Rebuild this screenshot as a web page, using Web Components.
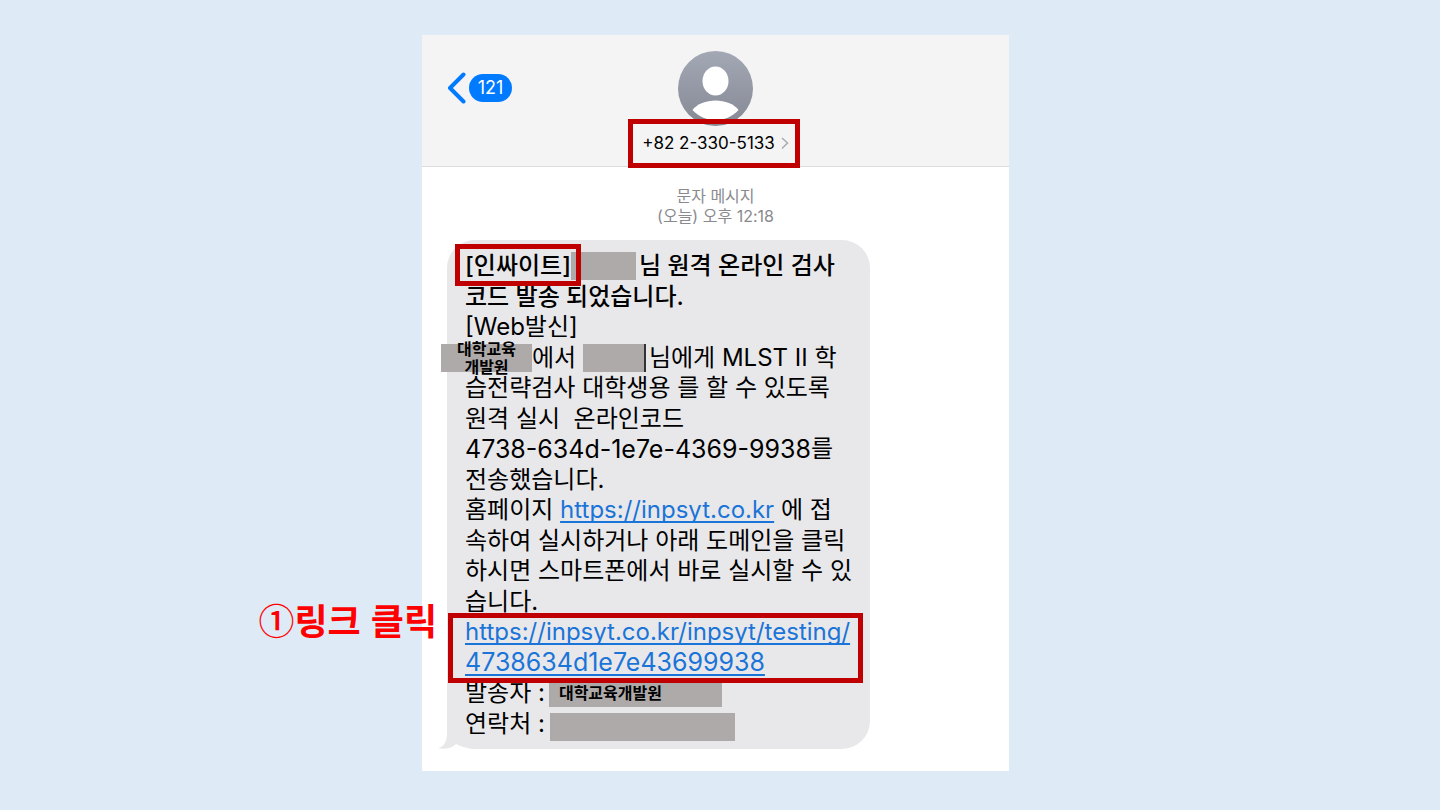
<!DOCTYPE html>
<html lang="ko">
<head>
<meta charset="utf-8">
<meta name="viewport" content="width=device-width, initial-scale=1">
<title>문자 메시지</title>
<style>
  body { margin: 0; min-height: 100vh; background: #deeaf6; color: #000;
    font-family: Inter, "Noto Sans CJK KR", sans-serif; }
</style>
</head>
<body>
<guide-slide>
  <phone-screen>
    <contact-header slot="header" unread="121">+82 2-330-5133</contact-header>
    <time-stamp><span>문자 메시지</span><span slot="time">(오늘) 오후 12:18</span></time-stamp>
    <message-bubble></message-bubble>
  </phone-screen>
</guide-slide>
<script>
const define = (name, html) => {
  const template = document.createElement('template');
  template.innerHTML = html;
  customElements.define(name, class extends HTMLElement {
    constructor() {
      super();
      this.attachShadow({ mode: 'open' }).append(template.content.cloneNode(true));
    }
    connectedCallback() {
      const count = this.shadowRoot.querySelector('[data-unread]');
      if (count) count.textContent = this.getAttribute('unread');
    }
  });
};

define('guide-slide', `
<style>
  :host { display: flex; justify-content: center; box-sizing: border-box; min-height: 100vh; padding: 35px 9px 39px 0; }
</style>
<slot></slot>`);

define('phone-screen', `
<style>
  :host { display: flex; flex-direction: column; width: 100%; max-width: 587px; background: #fff; }
  main { display: flex; flex-direction: column; padding: 19px 25px; }
</style>
<slot name="header"></slot>
<main><slot></slot></main>`);

/* Red rectangle drawn around whatever is slotted in. */
define('ring-mark', `
<style>
  :host { display: block; position: relative; white-space: nowrap; }
  i { position: absolute; inset: var(--ring-inset, -8px); border: 5px solid #c00000; pointer-events: none; z-index: 1; }
</style>
<slot></slot><i></i>`);

/* Grey block that hides private text. */
define('redacted-text', `
<style>
  :host { display: flex; flex: none; align-items: center; justify-content: center; height: 28px;
    background: #aeaaa9; font-size: 16px; line-height: 18px; font-weight: 700; text-align: center; white-space: pre; }
</style>
<slot></slot>`);

define('contact-header', `
<style>
  :host { display: grid; grid-template-columns: 1fr auto 1fr; padding: 16px 25px 11px; background: #f4f4f4; border-bottom: 1px solid #dcdcdd; }
  button { border: 0; padding: 0; background: none; font: inherit; color: inherit; display: flex; align-items: center; }
  .back { height: 74px; gap: 3px; justify-self: start; }
  .count { min-width: 43px; line-height: 28px; border-radius: 14px; background: #007aff; color: #fff; font-size: 18px; text-align: center; }
  .contact { display: flex; flex-direction: column; align-items: center; gap: 5px; }
  .name { gap: 6px; font-size: 17px; line-height: 24px; }
  ring-mark { --ring-inset: -12px -11px -13px -14px; }
  svg { display: block; }
</style>
<button class="back" aria-label="뒤로">
  <svg width="19" height="32" viewBox="0 0 19 32"><path d="M16.500 2.500 3 16l13.500 13.500" fill="none" stroke="#007aff" stroke-width="4" stroke-linecap="round" stroke-linejoin="round"/></svg>
  <span class="count" data-unread></span>
</button>
<div class="contact">
  <svg width="75" height="75" viewBox="0 0 75 75">
    <defs><linearGradient id="g" x2="0" y2="1"><stop stop-color="#a3a8b5"/><stop offset="1" stop-color="#858994"/></linearGradient></defs>
    <circle cx="37.500" cy="37.500" r="37.500" fill="url(#g)"/>
    <ellipse cx="37.500" cy="30" rx="13" ry="14.500" fill="#fff"/>
    <path d="M14.500 59C19 53 28 49.500 37.500 49.500S56 53 60.500 59C54 66 46 69 37.500 69S21 66 14.500 59Z" fill="#fff"/>
  </svg>
  <ring-mark><button class="name"><slot></slot>
    <svg width="8" height="14" viewBox="0 0 8 14"><path d="m1 2 5.500 5L1 12.500" fill="none" stroke="#a9abb3" stroke-width="1.500"/></svg>
  </button></ring-mark>
</div>`);

define('time-stamp', `
<style>
  :host { display: flex; flex-direction: column; align-items: center; color: #8a8a8e; font-size: 16px; line-height: 20px; }
</style>
<slot></slot><slot name="time"></slot>`);

define('message-bubble', `
<style>
  :host { display: block; position: relative; box-sizing: border-box; width: 423px; max-width: 100%; margin-top: 14px; padding: 11px 0 10px 18px;
    border-radius: 28px; background: #e8e8ea; font-size: 24px; }
  .tail { position: absolute; left: -9px; bottom: 0; }
  .line { position: relative; display: flex; align-items: center; height: 30px; line-height: 30px; white-space: pre; }
  .tall { height: 31px; }
  .strong { font-weight: 500; }
  .code { font-size: 25px; }
  a { color: #1b74d8; text-decoration: underline; text-decoration-thickness: 2px; text-underline-offset: 3px; text-decoration-skip-ink: none; }
  .tag { --ring-inset: -7px -10px -5px -10px; }
  .link { --ring-inset: -4px 7px -5px -17px; }
  .link a { display: block; line-height: 30px; white-space: pre; }
  .user { width: 65px; margin-right: 3px; }
  .office { width: 91px; margin-left: -24px; }
  .person { width: 61px; margin-right: 3px; border-right: 2px solid #333; }
  .sender { width: 173px; box-sizing: border-box; justify-content: start; padding-left: 10px; margin-left: 4px; }
  .phone { width: 185px; margin: 6px 0 0 5px; }
  .callout { position: absolute; right: 100%; top: -16px; margin-right: 28px; color: #f00; font: 700 36px/36px "Noto Sans CJK KR", sans-serif; white-space: pre; display: flex; }
  .callout span { font-weight: 500; }
</style>
<svg class="tail" width="40" height="32" viewBox="0 0 40 32"><path d="M9 0V16C9 24 6 30 0 31C7 33 14 31 18 27Q25 31 36 32L40 0Z" fill="#e8e8ea"/></svg>
<div class="line strong"><ring-mark class="tag">[인싸이트]</ring-mark><redacted-text class="user"></redacted-text>님 원격 온라인 검사</div>
<div class="line tall strong">코드 발송 되었습니다.</div>
<div class="line">[Web발신]</div>
<div class="line tall"><redacted-text class="office">대학교육
개발원</redacted-text>에서 <redacted-text class="person"></redacted-text>님에게 MLST II 학</div>
<div class="line">습전략검사 대학생용 를 할 수 있도록</div>
<div class="line tall">원격 실시  온라인코드</div>
<div class="line"><span class="code">4738-634d-1e7e-4369-9938</span>를</div>
<div class="line tall">전송했습니다.</div>
<div class="line">홈페이지 <a href="https://inpsyt.co.kr">https://inpsyt.co.kr</a> 에 접</div>
<div class="line tall">속하여 실시하거나 아래 도메인을 클릭</div>
<div class="line">하시면 스마트폰에서 바로 실시할 수 있</div>
<div class="line tall">습니다.</div>
<ring-mark class="link">
  <div class="callout"><span>①</span>링크 클릭</div>
  <a href="https://inpsyt.co.kr/inpsyt/testing/4738634d1e7e43699938">https://inpsyt.co.kr/inpsyt/testing/
<span class="code">4738634d1e7e43699938</span></a>
</ring-mark>
<div class="line">발송자 :<redacted-text class="sender">대학교육개발원</redacted-text></div>
<div class="line tall">연락처 :<redacted-text class="phone"></redacted-text></div>`);
</script>
</body>
</html>
